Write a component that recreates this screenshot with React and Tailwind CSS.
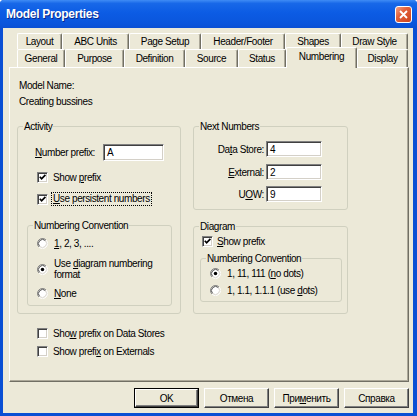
import React from 'react';

const row1 = [
  ['Layout', 'w-[45px]'],
  ['ABC Units', 'w-[67px]'],
  ['Page Setup', 'w-[72px]'],
  ['Header/Footer', 'w-[84px]'],
  ['Shapes', 'w-[56px]'],
  ['Draw Style', 'w-[67px]'],
];

const row2 = [
  ['General', 'w-[48px]'],
  ['Purpose', 'w-[59px]'],
  ['Definition', 'w-[61px]'],
  ['Source', 'w-[53px]'],
  ['Status', 'w-[48px]'],
  ['Numbering', 'w-[71px]', true],
  ['Display', 'w-[51px]'],
];

function Tab({ label, w, sel, h }) {
  return (
    <div
      className={`${w} ${sel ? 'h-[21px] relative z-10 bg-[#ECE9D8] -mb-[1px] pb-[4px]' : h} shrink-0 flex items-center justify-center rounded-t-[2px] border-t border-l border-r border-t-white border-l-white border-r-[#716F64] shadow-[inset_-1px_0_0_#ACA899]`}
    >
      {label}
    </div>
  );
}

function Check({ on }) {
  return (
    <span className="w-[11px] h-[11px] shrink-0 flex bg-white border border-t-[#808080] border-l-[#808080] border-b-white border-r-white shadow-[inset_1px_1px_0_#404040,inset_-1px_-1px_0_#D4D0C8]">
      {on && (
        <svg width="9" height="9" viewBox="0 0 9 9">
          <path d="M1.8 3.8 L3.6 5.8 L7.4 1.9" fill="none" stroke="#000" strokeWidth="1.7" />
        </svg>
      )}
    </span>
  );
}

function Radio({ on }) {
  return (
    <svg width="11" height="11" viewBox="0 0 12 12" className="shrink-0">
      <circle cx="6" cy="6" r="5" fill="#fff" />
      <path d="M2.11 9.89 A5.5 5.5 0 0 1 9.89 2.11" fill="none" stroke="#808080" />
      <path d="M9.89 2.11 A5.5 5.5 0 0 1 2.11 9.89" fill="none" stroke="#fff" />
      <path d="M2.82 9.18 A4.5 4.5 0 0 1 9.18 2.82" fill="none" stroke="#404040" />
      <path d="M9.18 2.82 A4.5 4.5 0 0 1 2.82 9.18" fill="none" stroke="#D4D0C8" />
      {on && <circle cx="6" cy="6" r="1.9" fill="#000" />}
    </svg>
  );
}

function Field({ value, w }) {
  return (
    <div className={`${w} h-[17px] shrink-0 bg-white pl-[3px] flex items-center border border-t-[#808080] border-l-[#808080] border-b-white border-r-white shadow-[inset_1px_1px_0_#404040,inset_-1px_-1px_0_#D4D0C8]`}>
      {value}
    </div>
  );
}

function Group({ label, className, children }) {
  return (
    <div className={`relative border border-[#D0D0BF] rounded-[3px] flex flex-col ${className}`}>
      <span className="absolute -top-[7px] left-[5px] px-[1px] bg-[#ECE9D8] leading-[13px]">{label}</span>
      {children}
    </div>
  );
}

function Btn({ children, def }) {
  return (
    <div className={`w-[65px] h-[20px] flex ${def ? 'border border-black' : ''}`}>
      <div className="flex-1 flex items-center justify-center bg-[#ECE9D8] border border-t-white border-l-white border-b-[#404040] border-r-[#404040] shadow-[inset_-1px_-1px_0_#808080]">
        {children}
      </div>
    </div>
  );
}

export default function App() {
  return (
    <div className="w-[417px] h-[416px] flex flex-col bg-[#0A4FD4] rounded-t-[4px] overflow-hidden font-['Liberation_Sans',Arial,sans-serif] text-[10px] leading-[13px] tracking-[-0.4px] text-black">
      {/* title bar */}
      <div className="h-[28px] shrink-0 flex items-center pl-[6px] pr-[5px] bg-[linear-gradient(180deg,#3F8CF5_0%,#1868E8_12%,#0C5CE4_45%,#0A55DC_85%,#0A4FD4_100%)]">
        <span className="flex-1 text-white font-bold text-[12px] leading-[14px] tracking-[-0.3px] [text-shadow:1px_1px_0_#0A2A8A]">
          Model Properties
        </span>
        <div className="w-[17px] h-[17px] rounded-[3px] border border-white flex items-center justify-center bg-[linear-gradient(135deg,#F4A083_0%,#E2603A_40%,#CC431D_100%)]">
          <svg width="11" height="11" viewBox="0 0 11 11">
            <path d="M2 2 L9 9 M9 2 L2 9" stroke="#fff" strokeWidth="1.8" />
          </svg>
        </div>
      </div>

      {/* body */}
      <div className="flex-1 ml-[3px] mr-[4px] mb-[3px] bg-[#ECE9D8] flex flex-col pt-[5px]">
        <div className="flex h-[16px] pl-[14px]">
          {row1.map(([l, w]) => (
            <Tab key={l} label={l} w={w} h="h-[16px]" />
          ))}
        </div>
        <div className="flex h-[18px] items-end pl-[14px]">
          {row2.map(([l, w, s]) => (
            <Tab key={l} label={l} w={w} sel={s} h="h-[18px] pb-[1px]" />
          ))}
        </div>

        {/* tab page */}
        <div className="ml-[6px] w-[400px] h-[315px] shrink-0 flex flex-col border border-t-white border-l-white border-b-[#716F64] border-r-[#716F64] shadow-[inset_-1px_-1px_0_#ACA899]">
          <div className="ml-[9px] mt-[11px]">Model Name:</div>
          <div className="ml-[9px] mt-[3px]">Creating bussines</div>

          <div className="flex items-start gap-[12px] ml-[7px] mt-[18px]">
            <Group label="Activity" className="w-[164px] h-[188px] pl-[17px]">
              <div className="mt-[17px] h-[17px] flex items-center">
                <span className="w-[68px]"><u>N</u>umber prefix:</span>
                <Field value="A" w="w-[61px]" />
              </div>
              <div className="mt-[10px] h-[13px] ml-[2px] flex items-center gap-[5px]">
                <Check on />
                <span>Show <u>p</u>refix</span>
              </div>
              <div className="mt-[8px] h-[14px] ml-[2px] flex items-center gap-[3px]">
                <Check on />
                <span className="border border-dotted border-black px-[1px] leading-[12px]"><u>U</u>se persistent numbers</span>
              </div>
              <Group label="Numbering Convention" className="mt-[19px] -ml-[8px] w-[145px] h-[81px] pl-[9px]">
                <div className="mt-[11px] h-[13px] flex items-center gap-[6px]">
                  <Radio />
                  <span><u>1</u>, 2, 3, ....</span>
                </div>
                <div className="mt-[8px] flex items-center gap-[6px]">
                  <Radio on />
                  <span className="leading-[11px]">Use <u>d</u>iagram numbering<br />format</span>
                </div>
                <div className="mt-[7px] h-[13px] flex items-center gap-[6px]">
                  <Radio />
                  <span><u>N</u>one</span>
                </div>
              </Group>
            </Group>

            <div className="w-[155px] flex flex-col">
              <Group label="Next Numbers" className="h-[84px]">
                <div className="mt-[14px] h-[16px] flex items-center">
                  <span className="w-[70px] text-right">Da<u>t</u>a Store:</span>
                  <div className="ml-[2px] flex"><Field value="4" w="w-[56px] !h-[16px]" /></div>
                </div>
                <div className="mt-[7px] h-[16px] flex items-center">
                  <span className="w-[70px] text-right"><u>E</u>xternal:</span>
                  <div className="ml-[2px] flex"><Field value="2" w="w-[56px] !h-[16px]" /></div>
                </div>
                <div className="mt-[6px] h-[16px] flex items-center">
                  <span className="w-[70px] text-right">U<u>O</u>W:</span>
                  <div className="ml-[2px] flex"><Field value="9" w="w-[56px] !h-[16px]" /></div>
                </div>
              </Group>

              <Group label="Diagram" className="mt-[16px] h-[88px]">
                <div className="mt-[8px] h-[13px] pl-[8px] flex items-center gap-[4px]">
                  <Check on />
                  <span><u>S</u>how prefix</span>
                </div>
                <Group label="Numbering Convention" className="mt-[10px] ml-[6px] w-[142px] h-[44px] pl-[9px]">
                  <div className="mt-[8px] h-[13px] flex items-center gap-[6px]">
                    <Radio on />
                    <span>1, 11, 111 (<u>n</u>o dots)</span>
                  </div>
                  <div className="mt-[4px] h-[13px] flex items-center gap-[6px]">
                    <Radio />
                    <span>1, 1.1, 1.1.1 (use <u>d</u>ots)</span>
                  </div>
                </Group>
              </Group>
            </div>
          </div>

          <div className="mt-[13px] ml-[27px] h-[13px] flex items-center gap-[5px]">
            <Check />
            <span>Sho<u>w</u> prefix on Data Stores</span>
          </div>
          <div className="mt-[5px] ml-[27px] h-[13px] flex items-center gap-[5px]">
            <Check />
            <span>Show prefi<u>x</u> on Externals</span>
          </div>
        </div>

        {/* buttons */}
        <div className="mt-[6px] pr-[4px] flex justify-end gap-[5px]">
          <Btn def>OK</Btn>
          <Btn>Отмена</Btn>
          <Btn>При<u>м</u>енить</Btn>
          <Btn>Справка</Btn>
        </div>
      </div>
    </div>
  );
}
